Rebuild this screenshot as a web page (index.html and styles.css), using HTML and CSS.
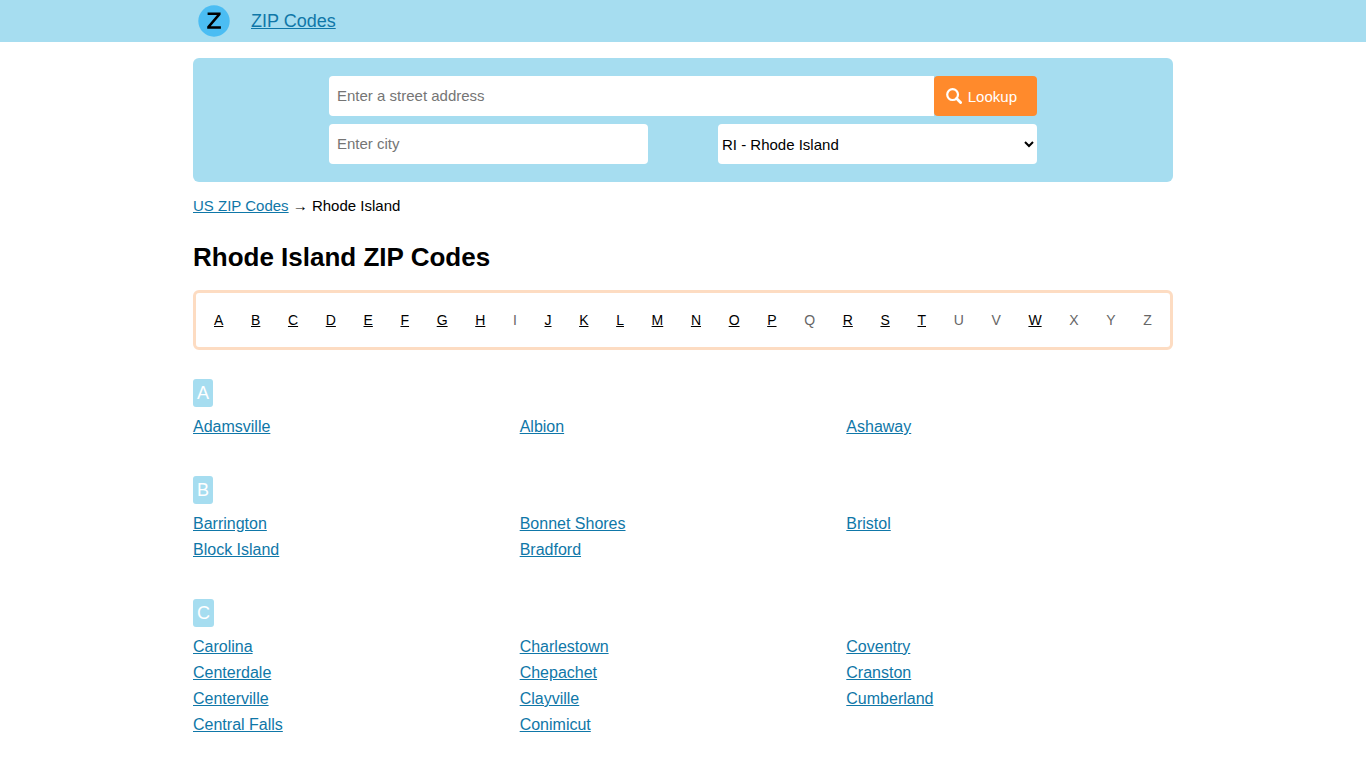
FILE: index.html
```html
<!DOCTYPE html>
<html lang="en">
<head>
<meta charset="utf-8">
<meta name="viewport" content="width=device-width, initial-scale=1">
<title>Rhode Island ZIP Codes</title>
<link rel="stylesheet" href="styles.css">
</head>
<body>
<header class="site-header">
  <div class="container brand">
    <svg class="logo" viewBox="0 0 32 32" aria-hidden="true">
      <circle cx="16" cy="16" r="15.7" fill="#4bbdf3"/>
      <path d="M9.6 7.6h13v2.2L12.7 21.3h10.2v2.5H9.2v-2.3L19 10.1H9.6z" fill="#000"/>
    </svg>
    <a class="brand-link" href="#">ZIP Codes</a>
  </div>
</header>
<main class="container">
  <form class="search">
    <div class="search-fields">
      <div class="address-row">
        <input class="field address" type="text" placeholder="Enter a street address" aria-label="Street address">
        <button class="lookup" type="submit">
          <svg class="lookup-icon" viewBox="0 0 16 16" aria-hidden="true">
            <circle cx="6.6" cy="6.6" r="5.4" fill="none" stroke="#fff" stroke-width="2.2"/>
            <path d="M10.6 10.6l4 4" stroke="#fff" stroke-width="2.8" stroke-linecap="round"/>
          </svg>
          Lookup
        </button>
      </div>
      <div class="place-row">
        <input class="field" type="text" placeholder="Enter city" aria-label="City">
        <select class="field state" aria-label="State"><option>RI - Rhode Island</option></select>
      </div>
    </div>
  </form>
  <nav class="breadcrumb" aria-label="Breadcrumb"><a href="#">US ZIP Codes</a> → Rhode Island</nav>
  <h1 class="title">Rhode Island ZIP Codes</h1>
  <nav class="letters" aria-label="Letters">
    <a href="#a">A</a><a href="#b">B</a><a href="#c">C</a><a href="#d">D</a><a href="#e">E</a><a href="#f">F</a><a href="#g">G</a><a href="#h">H</a><span>I</span><a href="#j">J</a><a href="#k">K</a><a href="#l">L</a><a href="#m">M</a><a href="#n">N</a><a href="#o">O</a><a href="#p">P</a><span>Q</span><a href="#r">R</a><a href="#s">S</a><a href="#t">T</a><span>U</span><span>V</span><a href="#w">W</a><span>X</span><span>Y</span><span>Z</span>
  </nav>
  <section class="group" id="a">
    <h2 class="badge">A</h2>
    <ul class="cities">
      <li><a href="#">Adamsville</a></li>
      <li><a href="#">Albion</a></li>
      <li><a href="#">Ashaway</a></li>
    </ul>
  </section>
  <section class="group" id="b">
    <h2 class="badge">B</h2>
    <ul class="cities">
      <li><a href="#">Barrington</a></li>
      <li><a href="#">Block Island</a></li>
      <li><a href="#">Bonnet Shores</a></li>
      <li><a href="#">Bradford</a></li>
      <li><a href="#">Bristol</a></li>
    </ul>
  </section>
  <section class="group" id="c">
    <h2 class="badge">C</h2>
    <ul class="cities">
      <li><a href="#">Carolina</a></li>
      <li><a href="#">Centerdale</a></li>
      <li><a href="#">Centerville</a></li>
      <li><a href="#">Central Falls</a></li>
      <li><a href="#">Charlestown</a></li>
      <li><a href="#">Chepachet</a></li>
      <li><a href="#">Clayville</a></li>
      <li><a href="#">Conimicut</a></li>
      <li><a href="#">Coventry</a></li>
      <li><a href="#">Cranston</a></li>
      <li><a href="#">Cumberland</a></li>
    </ul>
  </section>
</main>
</body>
</html>
```
FILE: styles.css
```css
* { box-sizing: border-box; }
body {
  margin: 0;
  background: #fff;
  color: #000;
  font-family: "Liberation Sans", Arial, sans-serif;
  font-size: 16px;
}
a { color: #0f77a8; }
.container { max-width: 980px; margin: 0 auto; }
.site-header { background: #a6ddf0; padding: 5px 0; }
.brand { display: flex; align-items: center; gap: 21px; padding: 0 5px; }
.logo { width: 32px; height: 32px; }
.brand-link { font-size: 18px; }
.search {
  display: flex;
  justify-content: center;
  margin-top: 16px;
  padding: 18px;
  background: #a6ddf0;
  border-radius: 6px;
}
.search-fields { display: grid; gap: 8px; width: 75%; }
.address-row { display: flex; }
.place-row { display: grid; grid-template-columns: 1fr 1fr; gap: 70px; }
.field {
  width: 100%;
  height: 40px;
  padding: 0 8px 2px;
  border: 0;
  border-radius: 4px;
  background: #fff;
  color: #000;
  font: inherit;
  font-size: 15px;
}
.field::placeholder { color: #757575; }
.address { flex: 1; border-radius: 4px 0 0 4px; }
.state { padding: 0; }
.lookup {
  display: flex;
  align-items: center;
  gap: 6px;
  height: 40px;
  padding: 0 20px 0 12px;
  border: 0;
  border-radius: 4px;
  background: #ff8a2c;
  color: #fff;
  font: inherit;
  font-size: 15px;
}
.lookup-icon { width: 16px; height: 16px; }
.breadcrumb { margin-top: 14px; font-size: 15px; line-height: 20px; }
.title { margin: 26px 0 18px; font-size: 26px; line-height: 30px; }
.letters {
  display: flex;
  justify-content: space-between;
  padding: 17px 18px;
  border: 3px solid #fddcc2;
  border-radius: 6px;
  font-size: 14px;
  line-height: 20px;
}
.letters a { color: #000; }
.letters span { color: #666; }
.group { margin-top: 36px; }
.letters + .group { margin-top: 29px; }
.badge {
  width: fit-content;
  margin: 0 0 7px;
  padding: 0 4px;
  border-radius: 3px;
  background: #a6ddf0;
  color: #fff;
  font-size: 18px;
  font-weight: 400;
  line-height: 28px;
}
.cities {
  columns: 3;
  column-gap: 0;
  margin: 0;
  padding: 0;
  list-style: none;
  line-height: 26px;
}
```
